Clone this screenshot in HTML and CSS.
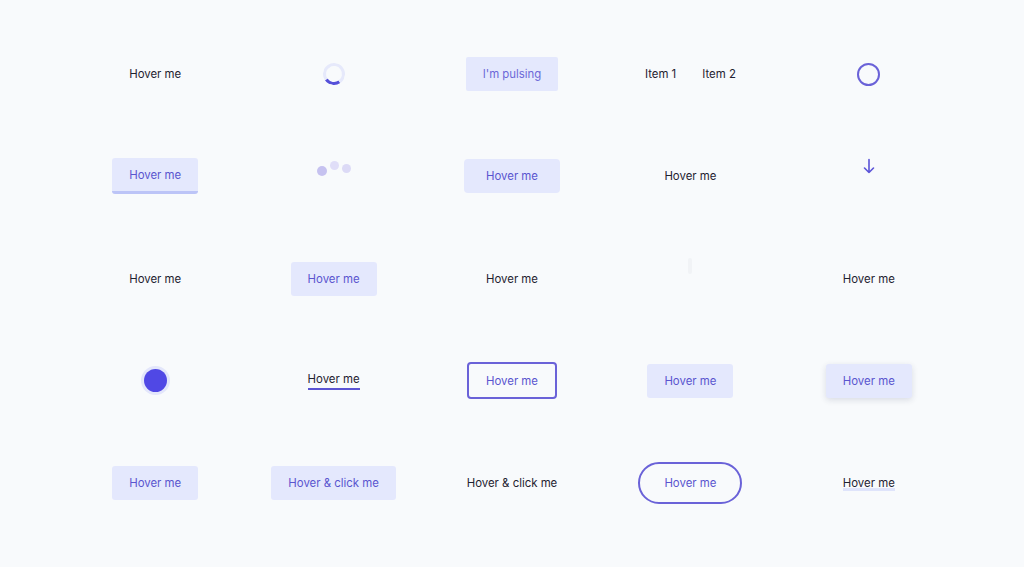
FILE: index.html
```html
<!DOCTYPE html>
<html lang="en">
<head>
<meta charset="utf-8">
<title>Hover effects</title>
<link rel="stylesheet" href="styles.css">
</head>
<body>
<main class="grid">
  <div class="cell"><span class="label">Hover me</span></div>
  <div class="cell"><span class="spinner"></span></div>
  <div class="cell"><button class="btn pulse">I'm pulsing</button></div>
  <div class="cell"><nav class="items"><span class="label">Item 1</span><span class="label">Item 2</span></nav></div>
  <div class="cell"><span class="ring"></span></div>

  <div class="cell"><button class="btn btn-bottom">Hover me</button></div>
  <div class="cell"><span class="dots"><i class="dot d1"></i><i class="dot d2"></i><i class="dot d3"></i></span></div>
  <div class="cell"><button class="btn btn-wide">Hover me</button></div>
  <div class="cell"><span class="label">Hover me</span></div>
  <div class="cell"><svg class="arrow" width="12" height="16" viewBox="0 0 12 16" fill="none" stroke="#5b54d8" stroke-width="1.6" stroke-linecap="round" stroke-linejoin="round"><path d="M6 1.5V14.5M1.5 10L6 14.5L10.5 10"/></svg></div>

  <div class="cell"><span class="label">Hover me</span></div>
  <div class="cell"><button class="btn">Hover me</button></div>
  <div class="cell"><span class="label">Hover me</span></div>
  <div class="cell"><span class="ghost"></span></div>
  <div class="cell"><span class="label">Hover me</span></div>

  <div class="cell"><span class="blob"></span></div>
  <div class="cell"><span class="label underline">Hover me</span></div>
  <div class="cell"><button class="btn btn-outline">Hover me</button></div>
  <div class="cell"><button class="btn">Hover me</button></div>
  <div class="cell"><button class="btn btn-shadow">Hover me</button></div>

  <div class="cell"><button class="btn">Hover me</button></div>
  <div class="cell"><button class="btn">Hover &amp; click me</button></div>
  <div class="cell"><span class="label">Hover &amp; click me</span></div>
  <div class="cell"><button class="btn btn-pill">Hover me</button></div>
  <div class="cell"><span class="label highlight">Hover me</span></div>
</main>
</body>
</html>
```
FILE: styles.css
```css
* { box-sizing: border-box; }
html, body { margin: 0; height: 100%; }
body {
  background: #f8fafc;
  font-family: Inter, "Noto Sans", "Liberation Sans", sans-serif;
  font-size: 11.4px;
  color: #1f2230;
}
.grid {
  display: grid;
  grid-template-columns: repeat(5, 1fr);
  grid-auto-rows: 102.25px;
  padding: 23px 66px 0;
}
.cell {
  display: flex;
  align-items: center;
  justify-content: center;
}
.label { line-height: 14px; }
.btn {
  font: inherit;
  line-height: 14px;
  color: #5a55cf;
  background: #e4e8fd;
  border: 0;
  border-radius: 3px;
  padding: 10px 17px;
}
.pulse { color: #6c68d8; padding: 10px 17px; border-radius: 2px; }
.btn-bottom {
  padding: 10px 17px 9px;
  border-bottom: 3px solid #bcc4f7;
  border-radius: 3px;
}
.btn-wide { padding: 10px 22px; border-radius: 4px; }
.btn-outline {
  background: transparent;
  border: 2px solid #6a62d8;
  border-radius: 4px;
  padding: 9.5px 17px;
}
.btn-shadow { box-shadow: 0 2px 6px rgba(30, 35, 80, 0.14); }
.btn-pill {
  background: transparent;
  border: 2px solid #6a62d8;
  border-radius: 21px;
  padding: 12px 24px;
}
.items { display: flex; gap: 26px; }
.spinner {
  width: 22px; height: 22px;
  border-radius: 50%;
  border: 3px solid #e6e9fb;
  border-bottom-color: #5550d9;
  transform: rotate(10deg);
}
.ring {
  width: 23px; height: 23px;
  border-radius: 50%;
  border: 2px solid #6a62d8;
}
.dots { display: flex; align-items: center; gap: 3px; }
.dot { display: block; border-radius: 50%; }
.d1 { width: 10px; height: 10px; background: #c6c2f0; transform: translateY(-5px); }
.d2 { width: 9px; height: 9px; background: #e0def8; transform: translateY(-11px); }
.d3 { width: 9px; height: 9px; background: #dcdaf6; transform: translateY(-8px); }
.arrow { transform: translateY(-10px); }
.ghost {
  width: 4px; height: 16px;
  background: #f1f3f6;
  border-radius: 2px;
  transform: translateY(-13px);
}
.blob {
  width: 23px; height: 23px;
  border-radius: 50%;
  background: #5048e5;
  box-shadow: 0 0 0 3px #e3e6fb;
}
.underline {
  padding-bottom: 2px;
  border-bottom: 2px solid #5b54d3;
  line-height: 14px;
}
.highlight {
  background-image: linear-gradient(#dfe4fb, #dfe4fb);
  background-repeat: no-repeat;
  background-position: 0 100%;
  background-size: 100% 3px;
  padding-bottom: 1px;
}
```
